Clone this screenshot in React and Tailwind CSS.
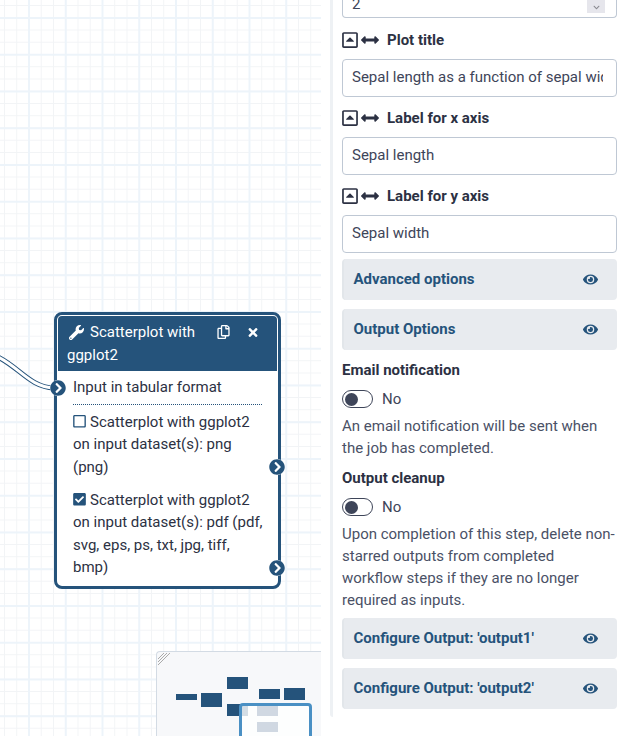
import React from 'react';
import {
    FaWrench, FaRegCopy, FaTimes, FaChevronCircleRight, FaRegSquare, FaCheckSquare, FaEye,
    FaRegCaretSquareUp, FaArrowsAltH, FaChevronDown,
} from 'react-icons/fa';

const blue = 'text-[#25537b]';

const MultiLabel = ({ children }) => (
    <div className="flex items-center h-[20px] text-[#2c3143]">
        <FaRegCaretSquareUp className="w-[16px] h-[18px]" />
        <FaArrowsAltH className="w-[18px] h-[18px] ml-[3px]" />
        <span className="ml-[8px] font-bold text-[15px]">{children}</span>
    </div>
);

const TextBox = ({ value }) => (
    <div className="mt-[9px] h-[38px] w-[275px] border border-[#bfc8d4] rounded-[4px] bg-white pl-[9px] pr-[13px] pb-[1px] flex items-center text-[15px] text-[#3e4559] whitespace-nowrap">
        <span className="overflow-hidden">{value}</span>
    </div>
);

const Section = ({ title, className = '' }) => (
    <div className={`h-[41px] w-[275px] bg-[#e8ebef] rounded-[4px] border-l-[2px] border-[#e2e6ea] pl-[9.5px] pr-[19px] flex items-center justify-between ${className}`}>
        <span className={`font-bold text-[15px] ${blue}`}>{title}</span>
        <FaEye className={`w-[15px] h-[15px] ${blue}`} />
    </div>
);

const Toggle = () => (
    <div className="flex items-center h-[18px] text-[15px] text-[#3e4559]">
        <div className="w-[31px] h-[18px] rounded-full border border-[#3e4559] bg-white flex items-center pl-[2px]">
            <div className="w-[13px] h-[13px] rounded-full bg-[#3e4559]" />
        </div>
        <span className="ml-[9px]">No</span>
    </div>
);

const Port = ({ className }) => (
    <div className={`absolute w-[16px] h-[16px] rounded-full bg-white ${className}`}>
        <FaChevronCircleRight className={`w-[16px] h-[16px] ${blue}`} />
    </div>
);

const WorkflowNode = () => (
    <div className="absolute left-[54px] top-[312px] w-[227px] h-[277px] rounded-[8px] border-[3px] border-[#25537b] bg-white p-[1px] text-[15px] leading-[22.5px] text-[#2c3143]">
        <div className="h-[55px] bg-[#25537b] rounded-t-[4px] text-white pl-[9px] pr-[18px] pt-[5px]">
            <div className="flex items-center">
                <FaWrench className="w-[15px] h-[15px] ml-[2px] mr-[6px]" />
                <span>Scatterplot with</span>
                <div className="ml-auto flex items-center gap-[17px]">
                    <FaRegCopy className="w-[13px] h-[14px]" />
                    <FaTimes className="w-[12px] h-[13px]" />
                </div>
            </div>
            <div>ggplot2</div>
        </div>
        <div className="pl-[15px] pr-[13px]">
            <div className="mr-[2px] pt-[5px] pb-[5.5px] border-b border-dotted border-[#25537b]">Input in tabular format</div>
            <div className="mt-[5.5px]">
                <FaRegSquare className="inline-block w-[13px] h-[14.5px] mr-[4px] mb-[2px] text-[#25537b]" />
                Scatterplot with ggplot2 on input dataset(s): png (png)
            </div>
            <div className="mt-[10.5px]">
                <FaCheckSquare className="inline-block w-[13px] h-[14.5px] mr-[4px] mb-[2px] text-[#25537b]" />
                Scatterplot with ggplot2 on input dataset(s): pdf (pdf, svg, eps, ps, txt, jpg, tiff, bmp)
            </div>
        </div>
    </div>
);

const Minimap = () => (
    <div className="absolute left-[156px] top-[651px] w-[165px] h-[85px] bg-[#f7f8fa] border-l border-t border-[#d3dbe4] rounded-tl-[4px] overflow-hidden">
        <svg className="absolute left-0 top-0" width="14" height="14" viewBox="0 0 14 14">
            <path d="M1 7 7 1M1 10 10 1M1 13 13 1" stroke="#aaaaaa" strokeWidth="1" />
        </svg>
        <div className="absolute left-[19px] top-[42px] w-[21px] h-[6px] bg-[#25537b]" />
        <div className="absolute left-[44px] top-[41px] w-[21px] h-[14px] bg-[#25537b]" />
        <div className="absolute left-[70px] top-[25px] w-[21px] h-[12px] bg-[#25537b]" />
        <div className="absolute left-[70px] top-[52px] w-[21px] h-[12px] bg-[#25537b]" />
        <div className="absolute left-[102px] top-[37px] w-[21px] h-[10px] bg-[#25537b]" />
        <div className="absolute left-[127px] top-[36px] w-[21px] h-[12px] bg-[#25537b]" />
        <div className="absolute left-[82px] top-[51px] w-[73px] h-[40px] rounded-[4px] border-[3px] border-[#4a90c4] bg-white/80" />
        <div className="absolute left-[100px] top-[54px] w-[21px] h-[10px] bg-[#d0d8e2]" />
        <div className="absolute left-[100px] top-[70px] w-[21px] h-[10px] bg-[#d0d8e2]" />
    </div>
);

const Canvas = () => (
    <div className="relative w-[321px] h-[736px] shrink-0 bg-white overflow-hidden bg-[linear-gradient(to_right,#edf4fa_2px,transparent_2px),linear-gradient(to_bottom,#edf4fa_2px,transparent_2px),linear-gradient(to_right,#f2f4f6_1px,transparent_1px),linear-gradient(to_bottom,#f2f4f6_1px,transparent_1px)] bg-[size:36.75px_36.75px,36.75px_36.75px,12.25px_12.25px,12.25px_12.25px] bg-[position:28px_0,0_17px,4px_0,0_5px]">
        <svg className="absolute left-0 top-[350px]" width="60" height="45" viewBox="0 0 60 45">
            <path d="M-2 7 C 20 18, 30 37, 54 38" fill="none" stroke="#25537b" strokeWidth="5" />
            <path d="M-2 7 C 20 18, 30 37, 54 38" fill="none" stroke="#ffffff" strokeWidth="3" />
        </svg>
        <WorkflowNode />
        <Port className="left-[50px] top-[380px]" />
        <Port className="left-[269px] top-[459px]" />
        <Port className="left-[269px] top-[560px]" />
        <Minimap />
    </div>
);

const App = () => (
    <div className="w-[618px] h-[736px] overflow-hidden flex bg-white font-['Roboto',sans-serif]">
        <Canvas />
        <div className="ml-[9px] h-[717px] w-[3px] shrink-0 bg-[#eef1f4] rounded-bl-[4px]" />
        <div className="ml-[9px] w-[275px] shrink-0">
            <div className="h-[18px] w-[275px] border border-t-0 border-[#bfc8d4] rounded-b-[4px] pl-[9px] pr-[11px] flex justify-between text-[15px] text-[#3e4559] leading-[8px]">
                <span>2</span>
                <div className="w-[18px] h-[13px] bg-[#e6e6ec] flex flex-col items-center justify-end pb-[2px]">
                    <FaChevronDown className="w-[11px] h-[7px] text-[#8a8a90]" />
                </div>
            </div>
            <div className="mt-[12px]"><MultiLabel>Plot title</MultiLabel></div>
            <TextBox value="Sepal length as a function of sepal width" />
            <div className="mt-[11px]"><MultiLabel>Label for x axis</MultiLabel></div>
            <TextBox value="Sepal length" />
            <div className="mt-[11px]"><MultiLabel>Label for y axis</MultiLabel></div>
            <TextBox value="Sepal width" />
            <Section title="Advanced options" className="mt-[6px]" />
            <Section title="Output Options" className="mt-[9px]" />
            <div className="mt-[10px] h-[21px] leading-[21px] font-bold text-[15px] text-[#2c3143]">Email notification</div>
            <div className="mt-[9px]"><Toggle /></div>
            <p className="mt-[7px] text-[15px] leading-[22px] text-[#4a5166]">An email notification will be sent when the job has completed.</p>
            <div className="mt-[9px] h-[21px] leading-[21px] font-bold text-[15px] text-[#2c3143]">Output cleanup</div>
            <div className="mt-[9px]"><Toggle /></div>
            <p className="mt-[7px] text-[15px] leading-[22px] text-[#4a5166]">Upon completion of this step, delete non-starred outputs from completed workflow steps if they are no longer required as inputs.</p>
            <Section title="Configure Output: 'output1'" className="mt-[7px]" />
            <Section title="Configure Output: 'output2'" className="mt-[9px]" />
        </div>
    </div>
);

export default App;
